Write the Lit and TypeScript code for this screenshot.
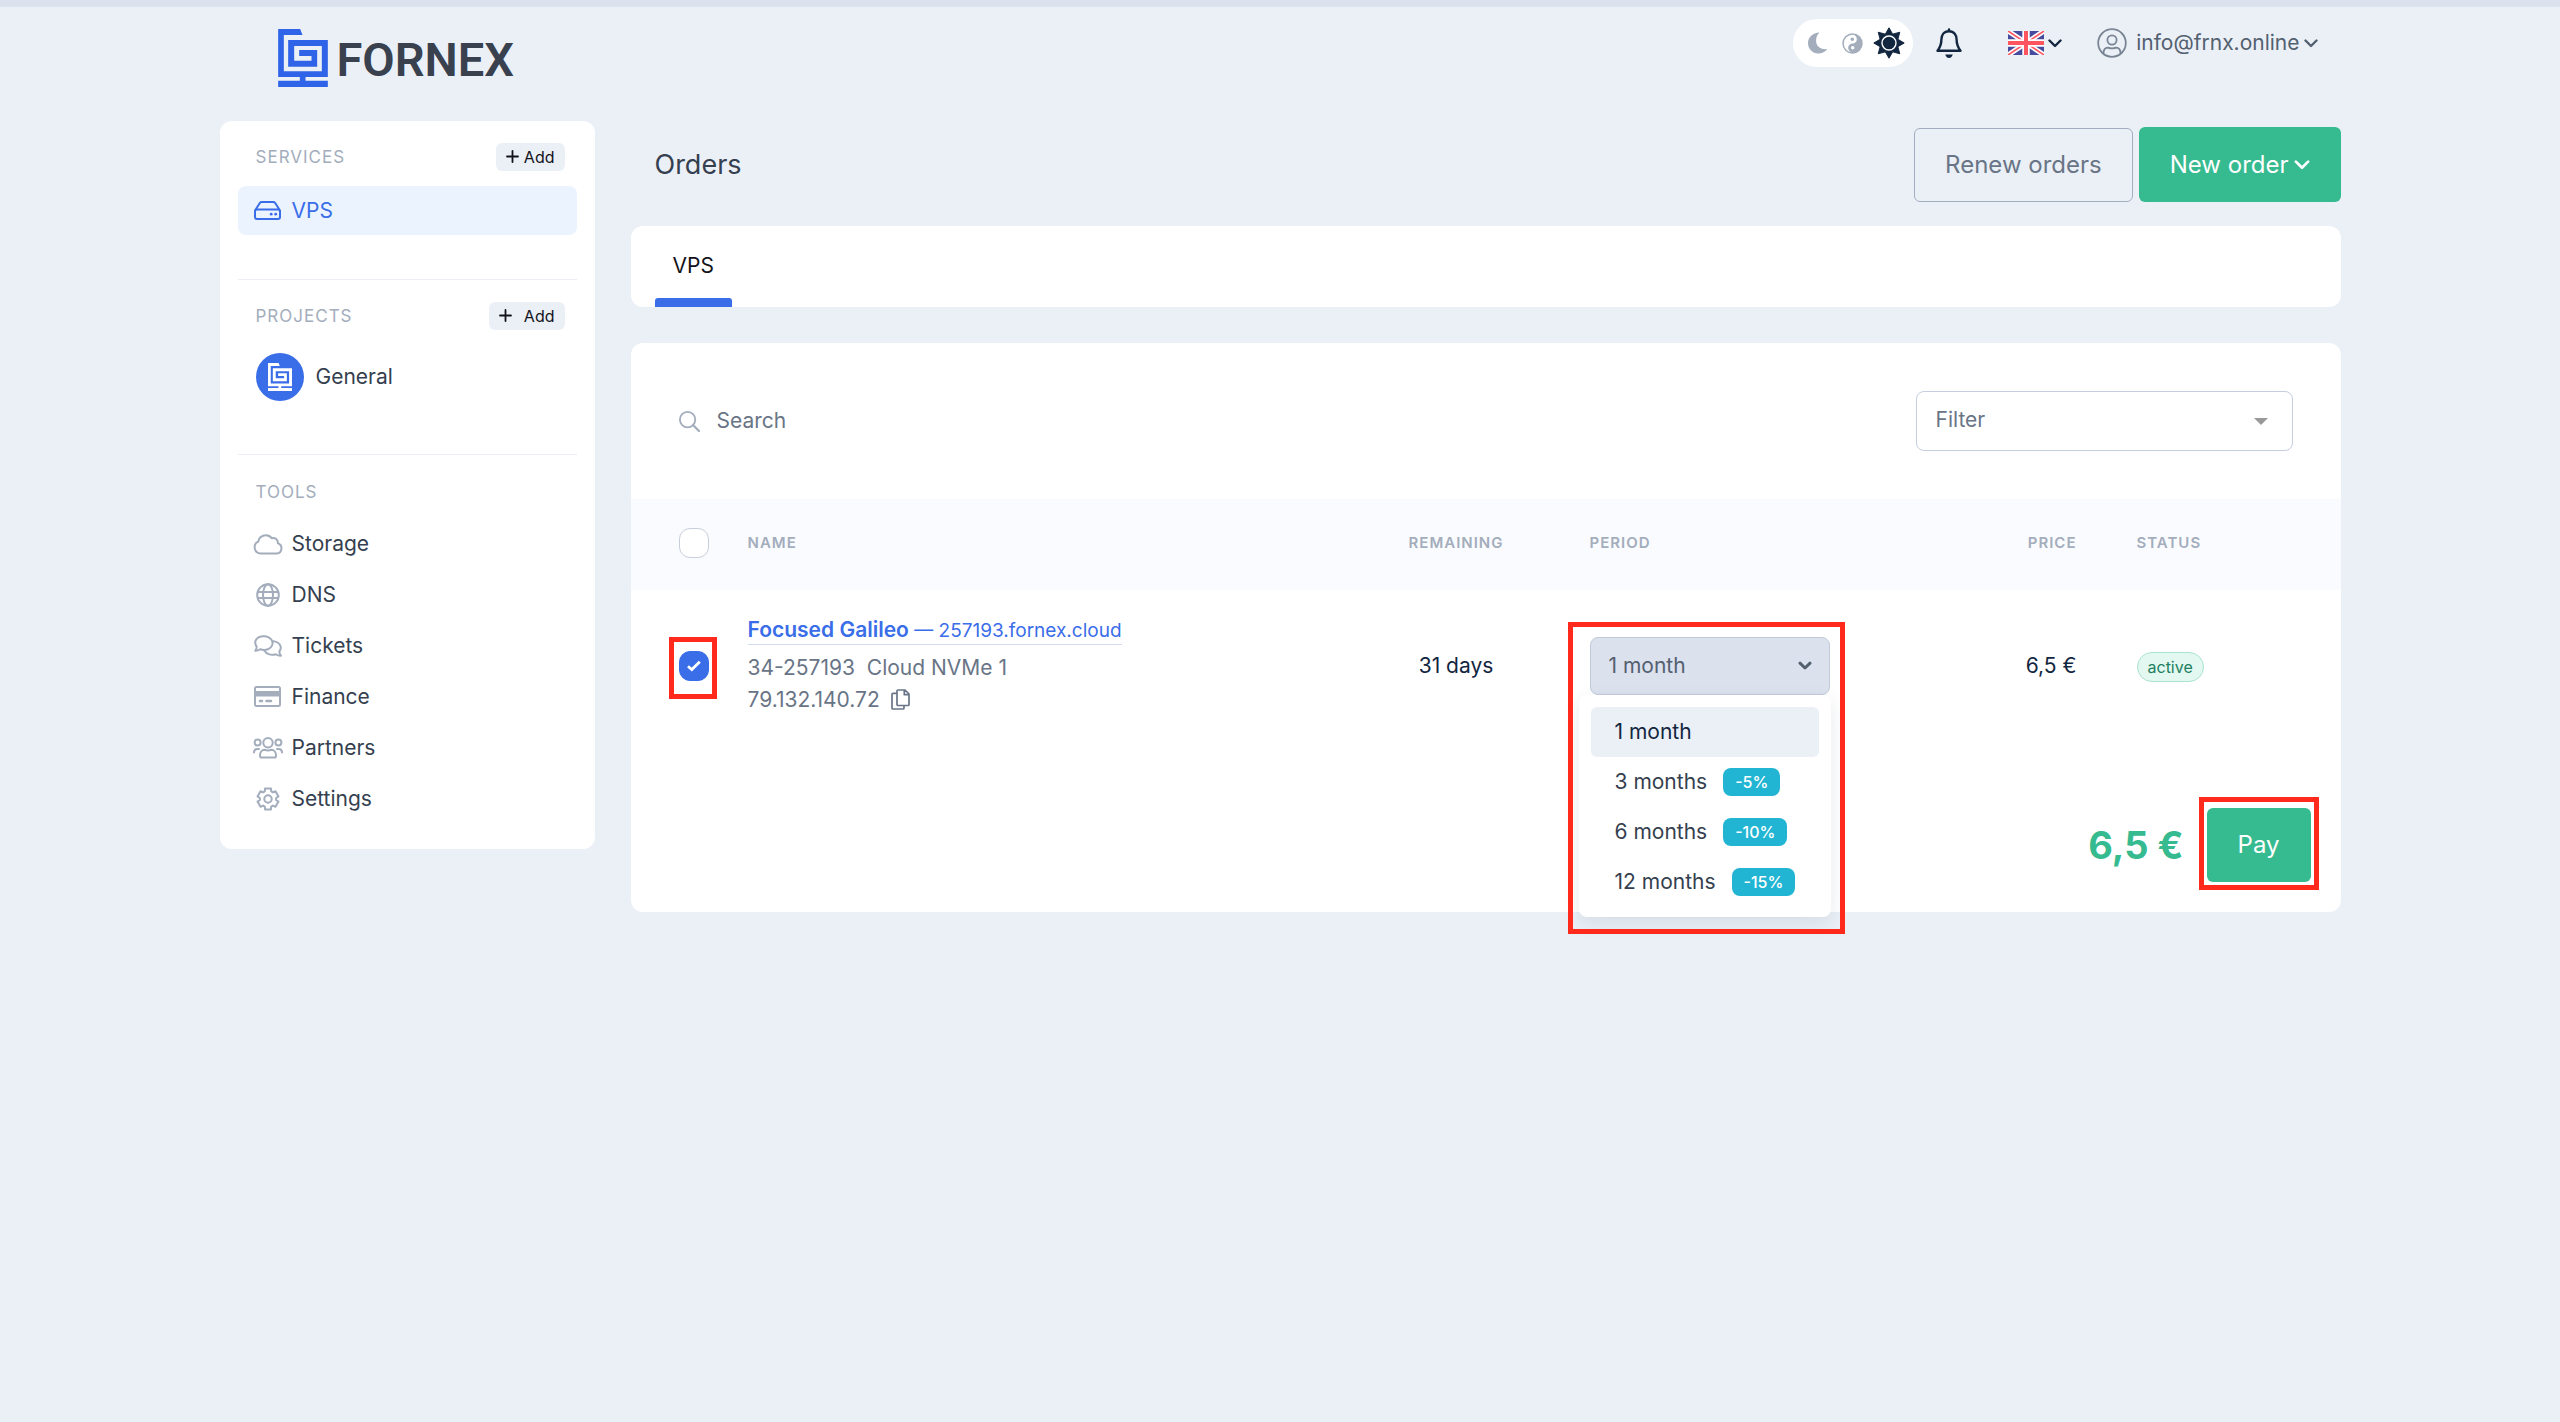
import { LitElement, html, css, svg } from "lit";
import { customElement, state } from "lit/decorators.js";

const chevron = (w: number, h: number) => html`
  <svg class="chev" width=${w} height=${h} viewBox="0 0 14 9" aria-hidden="true">
    <path d="M1.5 1.5 7 7 12.5 1.5" fill="none" stroke="currentColor" stroke-width="2.4" stroke-linecap="round" stroke-linejoin="round" />
  </svg>`;

const plus = html`
  <svg width="13" height="13" viewBox="0 0 13 13" aria-hidden="true">
    <path d="M6.5 1v11M1 6.5h11" fill="none" stroke="currentColor" stroke-width="1.8" stroke-linecap="round" />
  </svg>`;

const mark = (w: number, h: number) => html`
  <svg width=${w} height=${h} viewBox="0 0 149 174" aria-hidden="true" fill="currentColor">
    <path d="M0 0H66L73 18H17V127H131V51H48V95H100V81H63V63H117V113H30V33H149V144H82V155H149V174H0V155H65V144H0Z" />
  </svg>`;

const line = (w: number, h: number, body: unknown) => html`
  <svg width=${w} height=${h} viewBox="0 0 ${w} ${h}" aria-hidden="true" fill="none" stroke="currentColor" stroke-width="2" stroke-linecap="round" stroke-linejoin="round">${body}</svg>`;

const gearPath = (() => {
  const pts: string[] = [];
  for (let i = 0; i < 6; i++) {
    for (const [off, r] of [[-23, 8.2], [-16, 10.8], [16, 10.8], [23, 8.2]]) {
      const a = ((i * 60 + off) * Math.PI) / 180;
      pts.push(`${(12 + r * Math.sin(a)).toFixed(2)} ${(12 - r * Math.cos(a)).toFixed(2)}`);
    }
  }
  return `M${pts.join("L")}Z`;
})();

const sunPath = (() => {
  const pts: string[] = [];
  for (let i = 0; i < 16; i++) {
    const a = (i * Math.PI) / 8;
    const r = i % 2 ? 9.6 : 15.2;
    pts.push(`${(16 + r * Math.sin(a)).toFixed(2)} ${(16 - r * Math.cos(a)).toFixed(2)}`);
  }
  return `M${pts.join("L")}Z`;
})();

const icons = {
  drive: line(27, 19, svg`<path d="M1 9.5 6 1.8Q6.6 1 7.6 1H19.4Q20.4 1 21 1.8L26 9.5M3 8.5H24Q26 8.5 26 10.5V16Q26 18 24 18H3Q1 18 1 16V10.5Q1 8.500 3 8.500Z"/><circle cx="17.200" cy="13.200" r="1.400" fill="currentColor" stroke="none"/><circle cx="21.700" cy="13.200" r="1.400" fill="currentColor" stroke="none"/>`),
  cloud: line(30, 22, svg`<path d="M7.500 20.500A6.300 6.300 0 0 1 5.300 8.500 7.600 7.600 0 0 1 18.700 5.200 4.600 4.600 0 0 1 24.800 10.200 5.300 5.300 0 0 1 23.700 20.500Z"/>`),
  globe: line(24, 24, svg`<circle cx="12" cy="12" r="10.800"/><ellipse cx="12" cy="12" rx="5" ry="10.800"/><path d="M1.800 9H22.200M1.800 15H22.200"/>`),
  chat: line(28, 22, svg`<path d="M2.600 11.600C.2 8 1 4.300 4.500 2.400 8.600.2 14.500 1 17.200 4.400 20 8 18.300 12.600 14 14.200 11.200 15.200 8.400 15 6.200 14.200 4.600 15.400 3 15.900 1.200 15.800 2.300 14.400 2.800 13.200 2.600 11.600Z"/><path d="M18.800 6.200C22.600 6.300 26 8.500 26.700 11.700 27 13.500 26.600 15 25.400 16.400 25.300 18 25.800 19.300 26.900 20.700 25 20.800 23.300 20.300 21.700 19.200 17.500 20.600 12.500 19.500 10.300 15.500"/>`),
  card: line(27, 21, svg`<rect x="1" y="1" width="25" height="19" rx="1.500"/><path d="M1 5H26V10.500H1Z" fill="currentColor" stroke="none"/><path d="M6 15H8M12.500 15H17" stroke-width="2.600"/>`),
  people: line(30, 22, svg`<circle cx="15" cy="5.800" r="4.700"/><circle cx="4.600" cy="5.500" r="3"/><circle cx="25.400" cy="5.500" r="3"/><path d="M7 18.800C7 15 9 12.800 11.500 12.800 13.700 13.600 16.300 13.600 18.500 12.800 21 12.800 23 15 23 18.800Q23 20.600 21.500 20.600H8.500Q7 20.600 7 18.800ZM1 15.500C1 13 2.500 12 4.500 12H6M29 15.500C29 13 27.500 12 25.500 12H24"/>`),
  gear: line(24, 24, svg`<path d=${gearPath}/><circle cx="12" cy="12" r="3.700"/>`),
};

@customElement("app-root")
export class AppRoot extends LitElement {
  @state() private orderChecked = true;
  @state() private period = "1 month";

  private tools = [
    { label: "Storage", icon: icons.cloud },
    { label: "DNS", icon: icons.globe },
    { label: "Tickets", icon: icons.chat },
    { label: "Finance", icon: icons.card },
    { label: "Partners", icon: icons.people },
    { label: "Settings", icon: icons.gear },
  ];

  private periods = [
    { label: "1 month", discount: "" },
    { label: "3 months", discount: "-5%" },
    { label: "6 months", discount: "-10%" },
    { label: "12 months", discount: "-15%" },
  ];

  static styles = css`
    :host {
      display: block;
      min-height: 100vh;
      box-sizing: border-box;
      border-top: 7px solid #dbe1ed;
      background: #ebf0f7;
      color: #353f4f;
      font: 400 21px/30px Inter, "Open Sans", sans-serif;
    }
    *, *::before, *::after { box-sizing: border-box; }
    button, input, select { font: inherit; color: inherit; margin: 0; }
    button { border: 0; background: none; padding: 0; cursor: pointer; }
    a { color: inherit; text-decoration: none; }
    svg { display: block; flex: none; }
    h1, h2, ul, p { margin: 0; padding: 0; font: inherit; list-style: none; }
    .wrap { max-width: 2121px; margin: 0 auto; }

    .header { display: flex; justify-content: space-between; height: 114px; padding: 0 23px 0 58px; }
    .logo { display: flex; align-items: center; gap: 9px; height: 58px; margin-top: 22px; color: #2f63e8; }
    .word { color: #39414f; font: 600 47px/58px Roboto, "Liberation Sans", sans-serif; padding-top: 4px; }
    .tray { display: flex; align-items: center; height: 48px; margin-top: 12px; color: #13263f; }
    .themes { display: flex; align-items: center; gap: 14px; width: 120px; height: 48px; border-radius: 24px; background: #fff; padding-left: 15px; color: #a3adbc; }
    .themes .on { color: #13263f; margin-left: -4px; }
    .bell { margin-left: 22px; }
    .lang { display: flex; align-items: center; gap: 4px; margin-left: 45px; }
    .user { display: flex; align-items: center; margin-left: 35px; color: #536070; gap: 9px; }
    .mail { display: flex; align-items: center; gap: 4px; }

    .body { display: grid; grid-template-columns: 375px minmax(0, 1fr); gap: 36px; align-items: start; }
    .side { background: #fff; border-radius: 12px; padding: 0 18px 25px; }
    .group { border-bottom: 1px solid #ebeff5; }
    .group:last-child { border-bottom: 0; }
    .ghead { display: flex; justify-content: space-between; align-items: center; height: 65px; padding: 6px 12px 0 18px; }
    .gtitle { color: #a3adbc; font-size: 17px; line-height: 24px; letter-spacing: 1px; text-transform: uppercase; }
    .add { display: flex; align-items: center; gap: 5px; height: 28px; padding: 0 10px; border-radius: 6px; background: #ebf0f7; color: #12131a; font-size: 16px; line-height: 28px; }
    .add.wide { gap: 12px; }
    .item { display: flex; align-items: center; gap: 9px; height: 51px; padding-left: 15px; border-radius: 8px; }
    .item .ico { display: grid; place-items: center; width: 30px; color: #a3adbc; }
    .item.active, .item.active .ico { color: #3a6de8; }
    .item.active { background: #ebf3ff; height: 49px; }
    .services { padding-bottom: 44px; }
    .projects { padding-bottom: 53px; }
    .project { display: flex; align-items: center; gap: 12px; height: 48px; margin-top: 8px; padding-left: 18px; }
    .avatar { display: grid; place-items: center; width: 48px; height: 48px; border-radius: 50%; background: #3a6de8; color: #fff; }
    .tools .ghead { height: 63px; padding-top: 10px; }

    .title { display: flex; align-items: center; gap: 6px; margin: 6px 0 24px; padding-left: 24px; height: 75px; }
    .title h1 { flex: 1; font-size: 27px; line-height: 36px; }
    .btn { display: flex; align-items: center; justify-content: center; gap: 5px; height: 75px; padding: 0 31px; border-radius: 6px; font-size: 24px; background: #36ba90; color: #fff; }
    .btn.outline { background: none; border: 1px solid #a3adbf; color: #697586; height: 74px; padding: 0 30px; }
    .tabs { background: #fff; border-radius: 12px; height: 81px; padding-left: 24px; }
    .tab { position: relative; height: 81px; padding: 0 18px 2px; color: #12131a; }
    .tab::after { content: ""; position: absolute; inset: auto 0 0 0; height: 9px; background: #3a6de8; border-radius: 3px 3px 0 0; }

    .card { margin-top: 36px; background: #fff; border-radius: 12px; }
    .filters { display: flex; align-items: center; justify-content: space-between; height: 156px; padding: 0 48px; }
    .search { display: flex; align-items: center; gap: 17px; color: #a3adbc; }
    .search input { width: 600px; border: 0; outline: 0; background: none; padding: 0; color: #697586; }
    .search input::placeholder { color: #697586; opacity: 1; }
    .pick { display: grid; align-items: center; }
    .pick > * { grid-area: 1 / 1; }
    .pick > svg { justify-self: end; pointer-events: none; }
    .pick select { appearance: none; width: 100%; border: 1px solid #c5cede; border-radius: 8px; background: #fff; outline: 0; }
    .filter { width: 377px; color: #999; }
    .filter select { height: 60px; padding: 0 19px 2px; color: #697586; }
    .filter svg { margin-right: 25px; }

    table { width: 100%; border-collapse: collapse; table-layout: fixed; }
    th { height: 91px; padding: 0 0 4px; background: #fafbff; color: #a3adbc; font-size: 15px; font-weight: 600; letter-spacing: 1px; line-height: 20px; text-align: left; text-transform: uppercase; }
    td { height: 152px; padding: 0; color: #13263f; }
    .c-check { width: 117px; }
    .c-rem { width: 181px; }
    .c-per { width: 300px; }
    .c-price { width: 247px; }
    .c-stat { width: 204px; }
    th:first-child, td:first-child { padding-left: 48px; }
    .rem { text-align: center; padding-right: 86px; }
    .price { text-align: right; padding-right: 60px; }
    .tick { position: relative; display: grid; place-items: center; width: 30px; height: 30px; color: #fff; }
    .tick > * { grid-area: 1 / 1; }
    .tick > svg { position: relative; pointer-events: none; }
    .tick input { appearance: none; width: 30px; height: 30px; border: 1px solid #c8cedb; border-radius: 11px; background: #fff; }
    .tick input:checked { background: #3a6de8; border-color: #3a6de8; }
    .name { display: flex; flex-direction: column; align-items: flex-start; color: #697586; line-height: 32px; }
    .name a { color: #3a6de8; border-bottom: 1px solid #d3ddf2; font-size: 19px; line-height: 26px; margin-bottom: 7px; }
    .name b { font-weight: 600; font-size: 21px; }
    .plan { white-space: pre; }
    .ip { display: flex; align-items: center; gap: 11px; }
    .pill { display: inline-block; height: 30px; padding: 0 10px; border: 1px solid #a9e2cf; border-radius: 15px; background: #e3f8f1; color: #21805f; font-size: 16px; line-height: 28px; vertical-align: middle; }
    .frame { position: absolute; border: 5px solid #ff2a1c; pointer-events: none; z-index: 3; }
    .tick .frame { inset: -14px -8px -18px -10px; }
    .period { position: relative; width: 240px; }
    .period .frame { inset: -15px -15px -239px -22px; }
    .period select { height: 58px; padding: 0 18px; background: #dbe1ed; border-color: #c1cad9; color: #536070; }
    .period .pick { color: #536070; }
    .period .pick svg { margin-right: 18px; }
    .menu { position: absolute; z-index: 2; top: 58px; left: -11px; width: 252px; padding: 12px 12px 10px; border-radius: 8px; background: #fff; box-shadow: 0 6px 18px rgba(30, 45, 75, 0.1); }
    .opt { display: flex; align-items: center; gap: 16px; width: 100%; height: 50px; padding-left: 24px; border-radius: 6px; color: #353f4f; }
    .opt.sel { background: #ebf0f7; color: #13263f; }
    .off { height: 28px; padding: 0 12px; border-radius: 8px; background: #21b5d3; color: #fff; font-size: 16px; font-weight: 500; line-height: 28px; }
    .pay { display: flex; align-items: center; justify-content: flex-end; gap: 23px; padding: 66px 30px 30px; }
    .total { color: #36ba90; font-size: 38px; font-weight: 700; line-height: 48px; }
    .payslot { position: relative; }
    .payslot .btn { height: 74px; }
    .payslot .frame { inset: -11px -8px -8px; }
  `;

  private renderHeader() {
    return html`
      <header class="wrap header">
        <a class="logo" href="#" aria-label="Fornex">${mark(50, 58)}<span class="word">FORNEX</span></a>
        <div class="tray">
          <div class="themes">
            <button aria-label="Dark">
              <svg width="20" height="22" viewBox="0 0 20 22"><path d="M11.500.6C4.800 1 0 5.500 0 11 0 17 4.700 21.500 10.300 21.500 14.200 21.500 17.300 19.800 19.200 17 12.500 18 8.300 14 8.100 9.200 8 5.800 9.200 2.700 11.500.6Z" fill="currentColor"/></svg>
            </button>
            <button aria-label="Auto">
              <svg width="21" height="21" viewBox="0 0 21 21"><circle cx="10.500" cy="10.500" r="10.200" fill="currentColor"/><path d="M10.500 1.800A4.350 4.350 0 0 1 10.500 10.500 4.350 4.350 0 0 0 10.500 19.200 8.700 8.700 0 0 1 10.500 1.800Z" fill="#fff"/><circle cx="10.300" cy="6.200" r="1.700" fill="currentColor"/><circle cx="10.700" cy="14.800" r="1.700" fill="#fff"/></svg>
            </button>
            <button class="on" aria-label="Light">
              <svg width="32" height="32" viewBox="0 0 32 32"><path d=${sunPath} fill="currentColor" stroke="currentColor" stroke-linejoin="round"/><circle cx="16" cy="16" r="7" fill="none" stroke="#fff" stroke-width="1.400"/></svg>
            </button>
          </div>
          <button class="bell" aria-label="Notifications">
            <svg width="28" height="32" viewBox="0 0 28 32"><path d="M14 4.200C8.800 4.200 6.400 8 6.400 12.500 6.400 18 5 20.500 2.500 23.700H25.500C23 20.500 21.600 18 21.600 12.500 21.600 8 19.200 4.200 14 4.200ZM14 4V2.500" fill="none" stroke="currentColor" stroke-width="2.400" stroke-linecap="round" stroke-linejoin="round"/><path d="M10.200 27.500H17.800Q16.500 31 14 31T10.200 27.500Z" fill="currentColor"/></svg>
          </button>
          <button class="lang" aria-label="Language">
            <svg width="36" height="24" viewBox="0 0 36 24"><rect width="36" height="24" rx="1" fill="#474b9e"/><path d="M0 0 36 24M36 0 0 24" stroke="#fff" stroke-width="5"/><path d="M0 0 36 24M36 0 0 24" stroke="#ff5560" stroke-width="1.600"/><path d="M18 0V24M0 12H36" stroke="#fff" stroke-width="7.400"/><path d="M18 0V24M0 12H36" stroke="#ff5560" stroke-width="4"/></svg>
            ${chevron(14, 9)}
          </button>
          <button class="user">
            <svg width="30" height="30" viewBox="0 0 30 30" fill="none" stroke="#7a8594" stroke-width="1.800"><circle cx="15" cy="15" r="13.800"/><circle cx="15" cy="12" r="4.600"/><path d="M6.500 25.500C6.500 21.500 8.500 19.600 11 19.600 13.500 20.600 16.500 20.600 19 19.600 21.500 19.600 23.500 21.500 23.500 25.500"/></svg>
            <span class="mail">info@frnx.online ${chevron(14, 9)}</span>
          </button>
        </div>
      </header>`;
  }

  private renderSide() {
    return html`
      <aside class="side">
        <section class="group services">
          <div class="ghead"><h2 class="gtitle">Services</h2><button class="add">${plus}Add</button></div>
          <a class="item active" href="#"><span class="ico">${icons.drive}</span>VPS</a>
        </section>
        <section class="group projects">
          <div class="ghead"><h2 class="gtitle">Projects</h2><button class="add wide">${plus}Add</button></div>
          <a class="project" href="#"><span class="avatar">${mark(24, 28)}</span>General</a>
        </section>
        <section class="group tools">
          <div class="ghead"><h2 class="gtitle">Tools</h2></div>
          <nav>
            ${this.tools.map((t) => html`<a class="item" href="#"><span class="ico">${t.icon}</span>${t.label}</a>`)}
          </nav>
        </section>
      </aside>`;
  }

  private renderPeriod() {
    return html`
      <div class="period">
        <div class="pick">
          <select aria-label="Period" .value=${this.period} @change=${(e: Event) => (this.period = (e.target as HTMLSelectElement).value)}>
            ${this.periods.map((p) => html`<option>${p.label}</option>`)}
          </select>
          <svg width="14" height="10" viewBox="0 0 14 10"><path d="M2 2.200 7 7 12 2.200" fill="none" stroke="currentColor" stroke-width="3" stroke-linecap="round" stroke-linejoin="round"/></svg>
        </div>
        <div class="menu">
          ${this.periods.map(
            (p) => html`<button class="opt ${p.label === this.period ? "sel" : ""}" @click=${() => (this.period = p.label)}>
              ${p.label}${p.discount ? html`<span class="off">${p.discount}</span>` : ""}
            </button>`
          )}
        </div>
        <div class="frame"></div>
      </div>`;
  }

  private renderTable() {
    return html`
      <table>
        <colgroup><col class="c-check" /><col /><col class="c-rem" /><col class="c-per" /><col class="c-price" /><col class="c-stat" /></colgroup>
        <thead>
          <tr>
            <th><label class="tick"><input type="checkbox" aria-label="Select all orders" /></label></th>
            <th>Name</th><th class="rem">Remaining</th><th>Period</th><th class="price">Price</th><th>Status</th>
          </tr>
        </thead>
        <tbody>
          <tr>
            <td>
              <label class="tick">
                <input type="checkbox" aria-label="Select order 34-257193" .checked=${this.orderChecked} @change=${(e: Event) => (this.orderChecked = (e.target as HTMLInputElement).checked)} />
                <svg width="16" height="12" viewBox="0 0 16 12"><path d="M2 6.200 5.800 9.600 13.800 1.800" fill="none" stroke="currentColor" stroke-width="2.800"/></svg>
                <span class="frame"></span>
              </label>
            </td>
            <td>
              <div class="name">
                <a href="#"><b>Focused Galileo</b> — 257193.fornex.cloud</a>
                <span class="plan">34-257193  Cloud NVMe 1</span>
                <span class="ip">79.132.140.72
                  <button aria-label="Copy address">
                    <svg width="19" height="21" viewBox="0 0 19 21" fill="none" stroke="#697586" stroke-width="1.700" stroke-linejoin="round"><path d="M6 4.300H2Q1 4.300 1 5.300V19Q1 20 2 20H12Q13 20 13 19V16.500"/><path d="M7 1H14L18 5V15.500Q18 16.500 17 16.500H7Q6 16.500 6 15.500V2Q6 1 7 1ZM13.300 1V5.700H18"/></svg>
                  </button>
                </span>
              </div>
            </td>
            <td class="rem">31 days</td>
            <td>${this.renderPeriod()}</td>
            <td class="price">6,5 €</td>
            <td><span class="pill">active</span></td>
          </tr>
        </tbody>
      </table>`;
  }

  render() {
    return html`
      ${this.renderHeader()}
      <div class="wrap body">
        ${this.renderSide()}
        <main>
          <div class="title">
            <h1>Orders</h1>
            <button class="btn outline">Renew orders</button>
            <button class="btn">New order ${chevron(16, 10)}</button>
          </div>
          <nav class="tabs"><button class="tab">VPS</button></nav>
          <section class="card">
            <div class="filters">
              <label class="search">
                <svg width="21" height="21" viewBox="0 0 21 21" fill="none" stroke="currentColor" stroke-width="1.800" stroke-linecap="round"><circle cx="8.600" cy="8.600" r="7.700"/><path d="M14 14 20 20" stroke-width="2.200"/></svg>
                <input type="text" placeholder="Search" aria-label="Search" />
              </label>
              <div class="pick filter">
                <select aria-label="Filter"><option>Filter</option></select>
                <svg width="14" height="7" viewBox="0 0 14 7"><path d="M0 0H14L7 7Z" fill="currentColor"/></svg>
              </div>
            </div>
            ${this.renderTable()}
            <div class="pay">
              <span class="total">6,5 €</span>
              <div class="payslot"><button class="btn">Pay</button><div class="frame"></div></div>
            </div>
          </section>
        </main>
      </div>`;
  }
}
